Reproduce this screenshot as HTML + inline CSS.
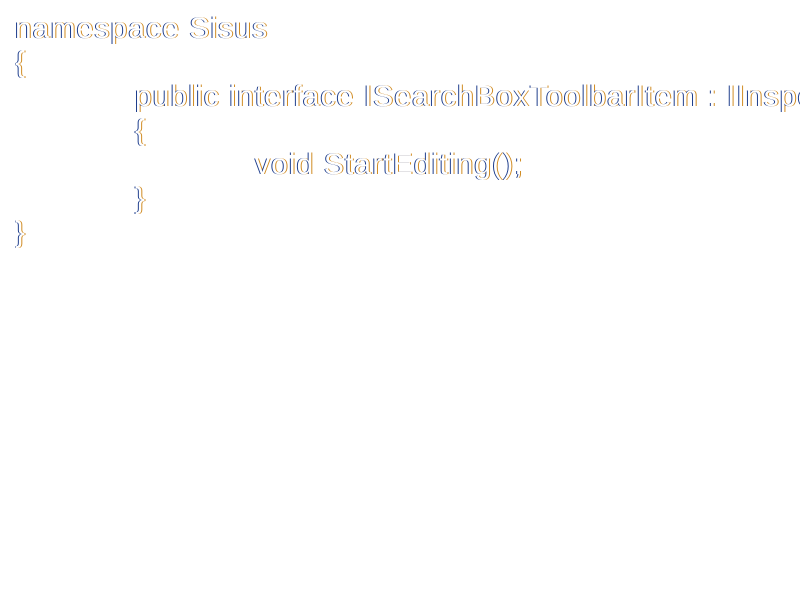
<!DOCTYPE html>
<html><head><style>
html,body{margin:0;padding:0;background:#fff;width:800px;height:600px;overflow:hidden}
pre{margin:0;position:absolute;left:15px;top:12px;width:785px;overflow:hidden;font-family:"Liberation Sans",sans-serif;font-size:30px;line-height:34px;color:#fff;letter-spacing:1.1px;
text-shadow:-1px 0 #1a3a8a,1px 0 #d08a20;white-space:pre}
.i1{padding-left:120px}.i2{padding-left:240px}
</style></head><body>
<pre>namespace Sisus
{
<span class="i1">public interface ISearchBoxToolbarItem : IInspectorToolbarItem</span>
<span class="i1">{</span>
<span class="i2">void StartEditing();</span>
<span class="i1">}</span>
}</pre>
</body></html>
